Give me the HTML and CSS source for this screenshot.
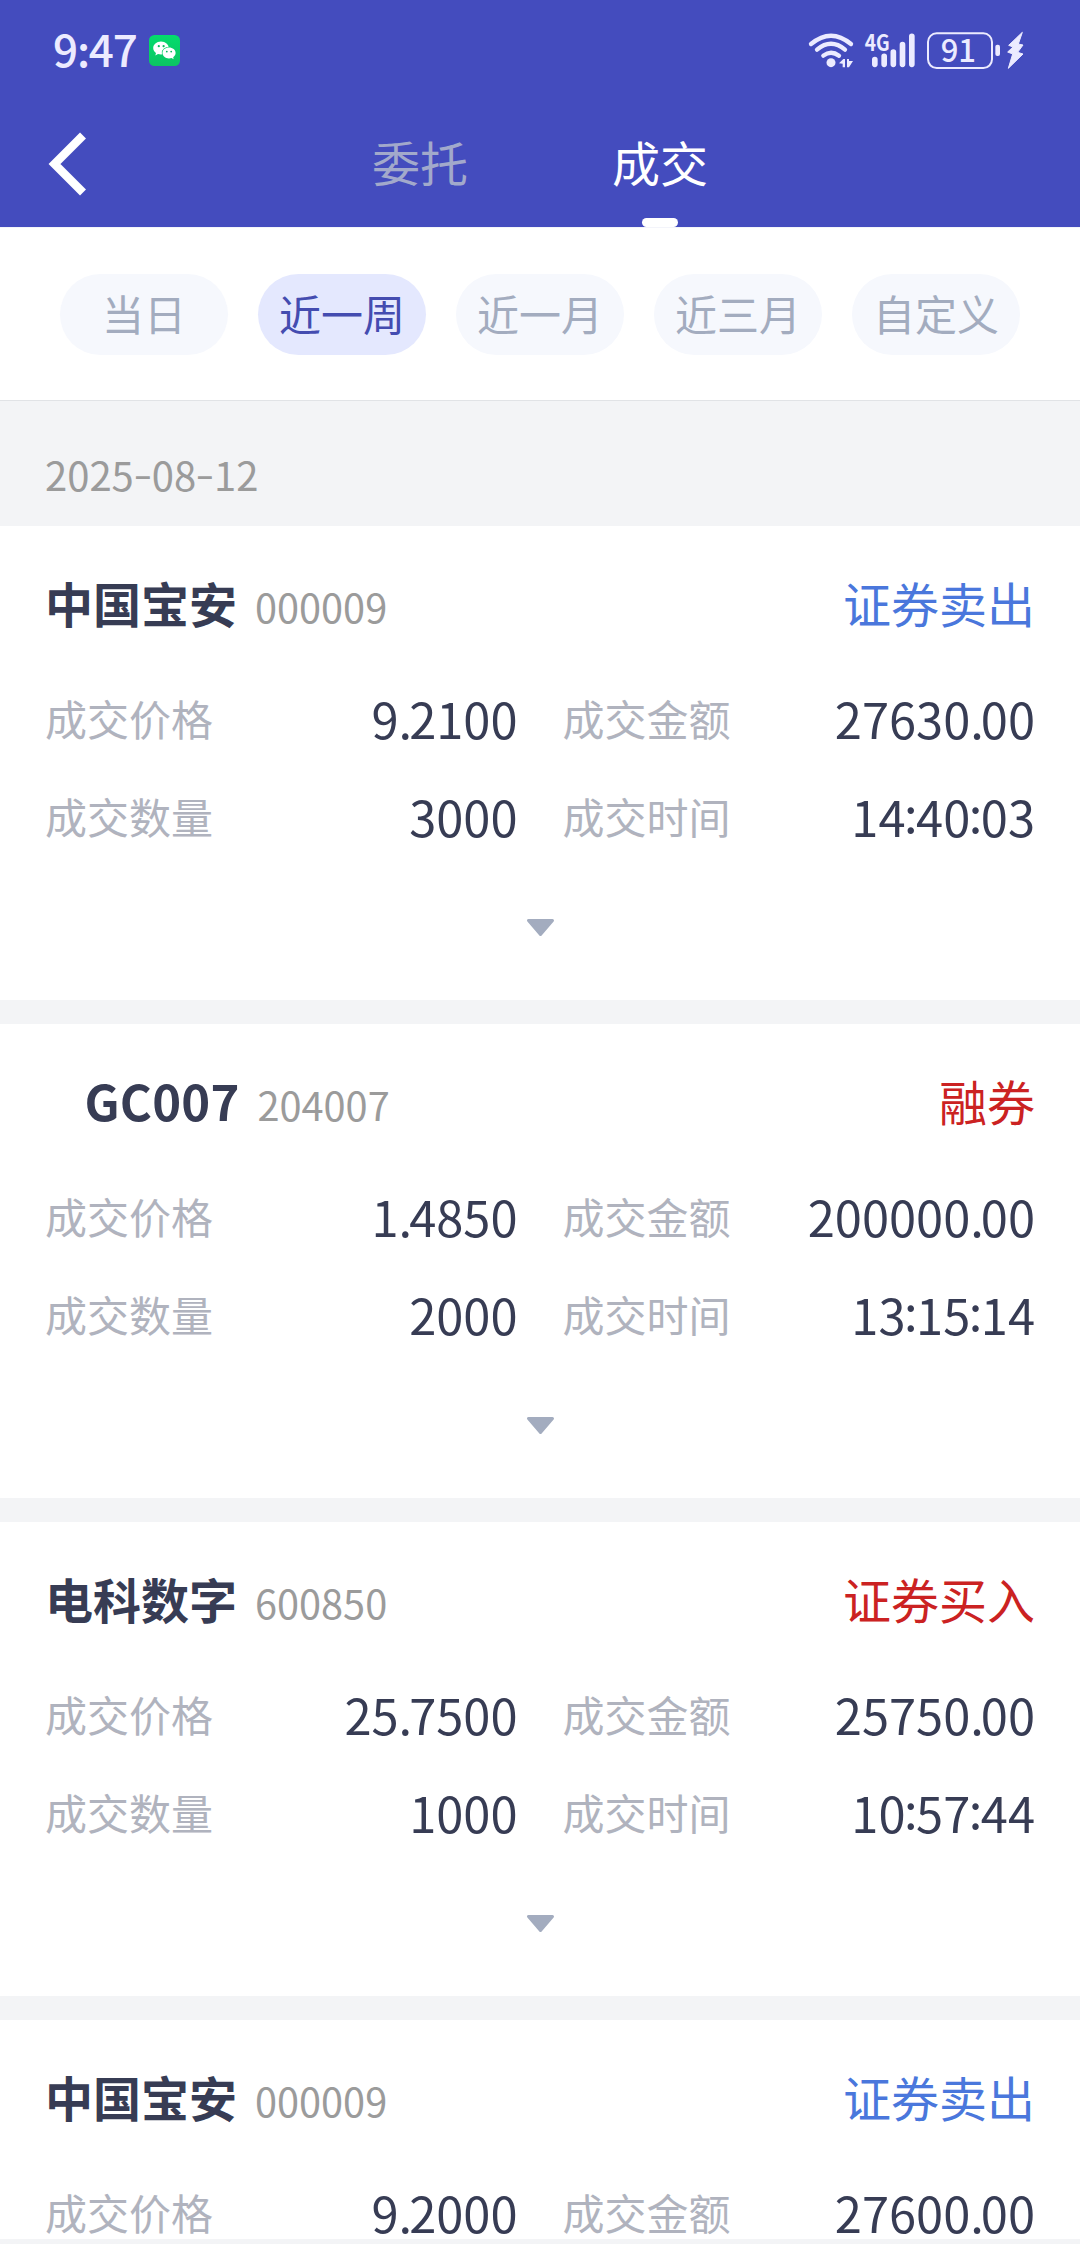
FILE: index.html
```html
<!DOCTYPE html>
<html lang="zh-CN">
<head>
<meta charset="utf-8">
<title>成交</title>
<link rel="stylesheet" href="styles.css">
</head>
<body>
<header class="header">
  <div class="status">
    <span class="clock">9:47</span>
    <svg class="wechat" viewBox="0 0 31 31">
      <defs><linearGradient id="wg" x1="0" y1="0" x2="0" y2="1"><stop offset="0" stop-color="#04dc6c"/><stop offset="1" stop-color="#0cc463"/></linearGradient></defs>
      <rect width="31" height="31" rx="5.5" fill="url(#wg)"/>
      <path d="M12 6.500c-4.400 0-7.800 3-7.800 6.600 0 2.100 1.100 3.800 2.800 5l-.7 2.300 2.700-1.400c1 .3 2 .4 3 .4 4.400 0 7.800-2.800 7.800-6.300S16.400 6.500 12 6.500z" fill="#fff"/>
      <ellipse cx="20" cy="18" rx="7.200" ry="6.200" fill="#08cf67"/>
      <path d="M20 12.600c-3.700 0-6.500 2.400-6.500 5.400s2.800 5.400 6.500 5.400c.9 0 1.800-.1 2.600-.4l2 1.200-.4-2c1.500-1 2.400-2.500 2.400-4.200 0-3-2.900-5.400-6.600-5.400z" fill="#fff"/>
      <g fill="#08b85c"><circle cx="9.800" cy="11.200" r="1.100"/><circle cx="14.600" cy="11.200" r="1.100"/><circle cx="17.800" cy="16.600" r=".9"/><circle cx="22.200" cy="16.600" r=".9"/></g>
    </svg>
    <svg class="wifi" viewBox="87 66 135 111">
      <g fill="none" stroke="#ecebff" stroke-width="13" stroke-linecap="round"><path d="M93 102Q153 52 213 102"/><path d="M111 119Q153 84 195 119"/><path d="M130 137Q153 119 177 137"/></g>
      <circle cx="153" cy="158" r="13.500" fill="#ecebff"/>
      <path d="M177 160L190 147H195V172H188V161zM201 147H207V153H219L207 172H201z" fill="#ecebff"/>
    </svg>
    <svg class="signal" viewBox="252 66 156 111">
      <text class="net" x="254" y="122" textLength="75" lengthAdjust="spacingAndGlyphs">4G</text>
      <g stroke="#ecebff" stroke-width="17" stroke-linecap="round"><path d="M284.500 149V163M312.500 139V163M340 126V163M367.500 104V163M395.500 79V163"/></g>
    </svg>
    <svg class="battery" viewBox="441 66 222 111">
      <rect x="444" y="70" width="192" height="104" rx="26" fill="none" stroke="#ecebff" stroke-width="6"/>
      <text class="level" x="535" y="156" text-anchor="middle">91</text>
      <rect x="646" y="104" width="14" height="34" rx="6" fill="#ecebff"/>
    </svg>
    <svg class="bolt" viewBox="682 66 51 111">
      <path d="M728 67L687 106L700 111L684 126L699 132L686 175L730 132L714 127L730 105L716 102z" fill="#ecebff" stroke="#ecebff" stroke-width="3" stroke-linejoin="round"/>
    </svg>
  </div>
  <nav class="nav">
    <svg class="back" viewBox="0 0 40 64"><path d="M35 3.500L6.500 32L35 60.500" fill="none" stroke="#fff" stroke-width="8.400"/></svg>
    <span class="tab">委托</span>
    <span class="tab active">成交</span>
  </nav>
</header>
<div class="filters">
  <span class="pill">当日</span><span class="pill selected">近一周</span><span class="pill">近一月</span><span class="pill">近三月</span><span class="pill">自定义</span>
</div>
<h2 class="date">2025<i>-</i>08<i>-</i>12</h2>
<main class="list">
  <section class="card">
    <div class="top"><b class="name">中国宝安</b><span class="code">000009</span><span class="side sell">证券卖出</span></div>
    <dl class="grid">
      <div><dt>成交价格</dt><dd>9<i>.</i>2100</dd></div><div><dt>成交金额</dt><dd>27630<i>.</i>00</dd></div>
      <div><dt>成交数量</dt><dd>3000</dd></div><div><dt>成交时间</dt><dd>14<u>:</u>40<u>:</u>03</dd></div>
    </dl>
    <svg class="more" viewBox="0 0 27 17"><path d="M1.500 1.500H25.500L13.500 15.500z"/></svg>
  </section>
  <section class="card">
    <div class="top"><b class="name latin">GC007</b><span class="code">204007</span><span class="side buy">融券</span></div>
    <dl class="grid">
      <div><dt>成交价格</dt><dd>1<i>.</i>4850</dd></div><div><dt>成交金额</dt><dd>200000<i>.</i>00</dd></div>
      <div><dt>成交数量</dt><dd>2000</dd></div><div><dt>成交时间</dt><dd>13<u>:</u>15<u>:</u>14</dd></div>
    </dl>
    <svg class="more" viewBox="0 0 27 17"><path d="M1.500 1.500H25.500L13.500 15.500z"/></svg>
  </section>
  <section class="card">
    <div class="top"><b class="name">电科数字</b><span class="code">600850</span><span class="side buy">证券买入</span></div>
    <dl class="grid">
      <div><dt>成交价格</dt><dd>25<i>.</i>7500</dd></div><div><dt>成交金额</dt><dd>25750<i>.</i>00</dd></div>
      <div><dt>成交数量</dt><dd>1000</dd></div><div><dt>成交时间</dt><dd>10<u>:</u>57<u>:</u>44</dd></div>
    </dl>
    <svg class="more" viewBox="0 0 27 17"><path d="M1.500 1.500H25.500L13.500 15.500z"/></svg>
  </section>
  <section class="card last">
    <div class="top"><b class="name">中国宝安</b><span class="code">000009</span><span class="side sell">证券卖出</span></div>
    <dl class="grid">
      <div><dt>成交价格</dt><dd>9<i>.</i>2000</dd></div><div><dt>成交金额</dt><dd>27600<i>.</i>00</dd></div>
    </dl>
  </section>
</main>
</body>
</html>
```
FILE: styles.css
```css
* { box-sizing: border-box; margin: 0; padding: 0; }
body {
  width: 1080px;
  height: 2244px;
  overflow: hidden;
  display: flex;
  flex-direction: column;
  background: #f3f4f6;
  font-family: "Noto Sans CJK SC", sans-serif;
  color: #373c54;
}
svg { display: block; flex: none; overflow: visible; }
i, u { font-style: normal; text-decoration: none; }

.header { flex: none; height: 227px; background: #444cbe; }
.status { height: 101px; padding: 0 56px 0 53px; display: flex; align-items: center; }
.clock { width: 96px; padding-bottom: 5px; font-size: 44px; line-height: 64px; font-weight: 500; letter-spacing: -1.2px; color: #ecebff; }
.wechat { width: 31px; height: 31px; }
.wifi { width: 45px; height: 37px; margin-left: auto; }
.signal { width: 52px; height: 37px; margin-left: 10px; }
.battery { width: 74px; height: 37px; margin-left: 11px; }
.bolt { width: 17px; height: 37px; margin-left: 6px; }
.net { font-size: 67px; font-weight: 700; fill: #ecebff; }
.level { font-size: 93px; font-weight: 500; fill: #ecebff; }

.nav { height: 126px; padding-left: 48px; display: flex; align-items: center; }
.back { width: 40px; height: 64px; margin-right: 212px; }
.tab {
  width: 240px;
  height: 126px;
  display: flex;
  flex-direction: column;
  align-items: center;
  font-size: 48px;
  line-height: 120px;
  color: #a2a9cb;
}
.tab.active { color: #fff; }
.tab.active::after {
  content: "";
  flex: none;
  width: 36px;
  height: 9px;
  margin-top: -3px;
  border-radius: 4.5px;
  background: #fff;
}

.filters {
  flex: none;
  height: 174px;
  padding: 46px 60px 0;
  display: flex;
  gap: 30px;
  background: #fff;
  border-top: 1px solid #f3f4fa;
  border-bottom: 1px solid #e1e3e6;
}
.pill {
  width: 168px;
  height: 81px;
  border-radius: 41px;
  background: #f6f8fd;
  color: #a3acbf;
  font-size: 42px;
  line-height: 78px;
  text-align: center;
}
.pill.selected { background: #e4e8fe; color: #444cb0; }

.date {
  flex: none;
  height: 125px;
  padding: 43px 45px 0;
  font-size: 40px;
  line-height: 60px;
  font-weight: 400;
  color: #9b9b9b;
}
.date i { display: inline-block; margin: 0 2px; transform: translateY(-2px) scaleX(1.35); }

.list { flex: none; display: flex; flex-direction: column; gap: 24px; }
.card { height: 474px; padding: 40px 45px 0; background: #fff; }
.card.last { height: 219px; }
.top { height: 72px; display: flex; align-items: baseline; line-height: 72px; }
.name { font-size: 48px; font-weight: 700; }
.name.latin { padding-left: 39.5px; font-size: 49px; letter-spacing: 0.2px; }
.code { margin-left: 18px; font-size: 39.7px; color: #9b9b9b; }
.side { margin-left: auto; font-size: 48px; }
.sell { color: #4a77dc; }
.buy { color: #cb2222; }
.grid { padding-top: 31px; display: grid; grid-template-columns: 1fr 1fr; column-gap: 45px; }
.grid div { height: 98px; display: flex; justify-content: space-between; align-items: center; line-height: 60px; }
.grid dt { font-size: 42px; }
.grid dt { color: #b0b3be; }
.grid dd { font-size: 48.8px; }
.grid i { letter-spacing: -3px; }
.grid u { display: inline-block; margin: 0 -1.5px; transform: translateY(-4px); }
.more { width: 27px; height: 17px; margin: 54px auto 0; fill: #a3acbf; stroke: #a3acbf; stroke-width: 3; stroke-linejoin: round; }
```
